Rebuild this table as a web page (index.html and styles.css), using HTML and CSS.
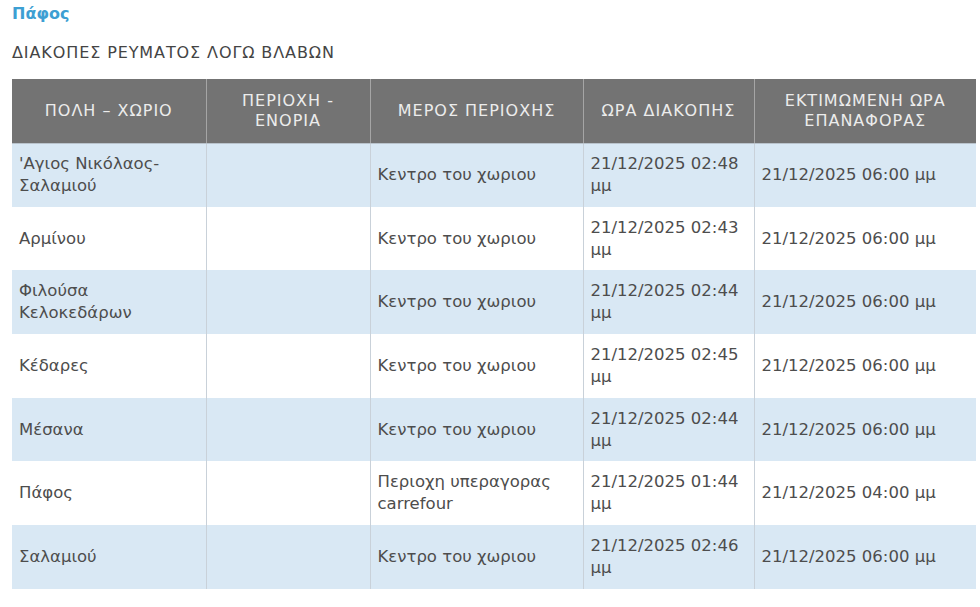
FILE: index.html
```html
<!DOCTYPE html>
<html lang="el">
<head>
<meta charset="utf-8">
<title>Πάφος</title>
<link rel="stylesheet" href="styles.css">
</head>
<body>
<main class="page">
  <h2 class="district">Πάφος</h2>
  <p class="subtitle">ΔΙΑΚΟΠΕΣ ΡΕΥΜΑΤΟΣ ΛΟΓΩ ΒΛΑΒΩΝ</p>
  <table class="outages">
    <colgroup>
      <col class="c1"><col class="c2"><col class="c3"><col class="c4"><col class="c5">
    </colgroup>
    <thead>
      <tr>
        <th>ΠΟΛΗ – ΧΩΡΙΟ</th>
        <th>ΠΕΡΙΟΧΗ -<br>ΕΝΟΡΙΑ</th>
        <th>ΜΕΡΟΣ ΠΕΡΙΟΧΗΣ</th>
        <th>ΩΡΑ ΔΙΑΚΟΠΗΣ</th>
        <th>ΕΚΤΙΜΩΜΕΝΗ ΩΡΑ<br>ΕΠΑΝΑΦΟΡΑΣ</th>
      </tr>
    </thead>
    <tbody>
      <tr><td>'Αγιος Νικόλαος-<br>Σαλαμιού</td><td></td><td>Κεντρο του χωριου</td><td>21/12/2025 02:48<br>μμ</td><td>21/12/2025 06:00 μμ</td></tr>
      <tr><td>Αρμίνου</td><td></td><td>Κεντρο του χωριου</td><td>21/12/2025 02:43<br>μμ</td><td>21/12/2025 06:00 μμ</td></tr>
      <tr><td>Φιλούσα<br>Κελοκεδάρων</td><td></td><td>Κεντρο του χωριου</td><td>21/12/2025 02:44<br>μμ</td><td>21/12/2025 06:00 μμ</td></tr>
      <tr><td>Κέδαρες</td><td></td><td>Κεντρο του χωριου</td><td>21/12/2025 02:45<br>μμ</td><td>21/12/2025 06:00 μμ</td></tr>
      <tr><td>Μέσανα</td><td></td><td>Κεντρο του χωριου</td><td>21/12/2025 02:44<br>μμ</td><td>21/12/2025 06:00 μμ</td></tr>
      <tr><td>Πάφος</td><td></td><td>Περιοχη υπεραγορας<br>carrefour</td><td>21/12/2025 01:44<br>μμ</td><td>21/12/2025 04:00 μμ</td></tr>
      <tr><td>Σαλαμιού</td><td></td><td>Κεντρο του χωριου</td><td>21/12/2025 02:46<br>μμ</td><td>21/12/2025 06:00 μμ</td></tr>
    </tbody>
  </table>
</main>
</body>
</html>
```

FILE: styles.css
```css
html, body {
  margin: 0;
  padding: 0;
  background: #ffffff;
}

.page {
  padding: 4px 0 0 12px;
  font-family: "DejaVu Sans", "Noto Sans", sans-serif;
  color: #444444;
}

.district {
  margin: 0;
  font-size: 16px;
  line-height: 20px;
  font-weight: bold;
  color: #3d9fd3;
}

.subtitle {
  margin: 19px 0 0 0;
  font-size: 16px;
  line-height: 20px;
  letter-spacing: 0.9px;
  color: #444444;
}

.outages {
  margin-top: 16px;
  width: 964px;
  border-collapse: collapse;
  table-layout: fixed;
  font-size: 16.5px;
  line-height: 22px;
}

.c1 { width: 194px; }
.c2 { width: 164px; }
.c3 { width: 213px; }
.c4 { width: 171px; }
.c5 { width: 222px; }

.outages th {
  background: #737373;
  color: #ececec;
  font-size: 16px;
  line-height: 20px;
  letter-spacing: 1px;
  font-weight: normal;
  height: 64px;
  padding: 0 6px;
  box-sizing: border-box;
  text-align: center;
  vertical-align: middle;
  border-left: 1px solid #a5a5a5;
  border-bottom: 1px solid #b9c3cc;
}

.outages th:first-child { border-left: none; }

.outages td {
  height: 63.7px;
  box-sizing: border-box;
  padding: 9px 7px;
  vertical-align: middle;
  border-left: 1px solid #c9d1d9;
  color: #4d4d4d;
}

.outages td:first-child { border-left: none; }

.outages tbody tr:nth-child(odd) td {
  background: #d9e8f4;
}
```
